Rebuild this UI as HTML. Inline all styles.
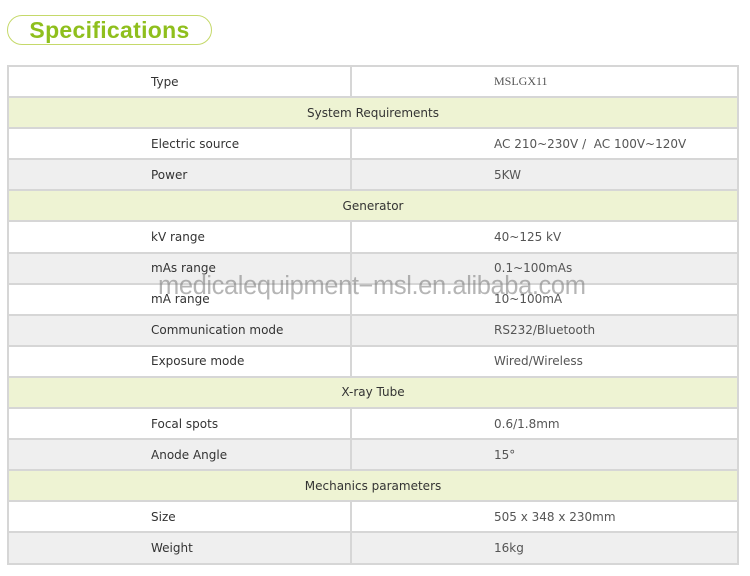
<!DOCTYPE html>
<html><head><meta charset="utf-8"><style>
body{margin:0;width:750px;height:576px;background:#fff;font-family:"DejaVu Sans","Liberation Sans",sans-serif;position:relative;overflow:hidden}
.pill{position:absolute;left:7px;top:15px;width:203px;height:28px;border:1.5px solid #c5d96a;border-radius:15px;color:#8fbf1d;font:bold 23px "Liberation Sans",sans-serif;text-align:center;line-height:28px;letter-spacing:0.3px}
table{position:absolute;left:7px;top:65px;width:732px;border-collapse:collapse;font-size:12px;color:#3a3a3a}
td{border:2px solid #d6d6d6;height:29.1px;padding:0}
td.l{width:343px;padding-left:142px;box-sizing:border-box;font-weight:500;color:#333}
td.r{padding-left:142px;color:#555}
tr.g td{background:#efefef}
tr.s td{background:#eef3d3;text-align:center;color:#333}
.wm{position:absolute;left:158px;top:272px;font:25.5px "Liberation Sans",sans-serif;color:rgba(120,120,120,0.55);letter-spacing:-0.4px}
</style></head><body>
<div class="pill">Specifications</div>
<table>
<tr><td class="l">Type</td><td class="r" style="font-family:'Liberation Serif',serif">MSLGX11</td></tr>
<tr class="s"><td colspan="2">System Requirements</td></tr>
<tr><td class="l">Electric source</td><td class="r">AC 210~230V /&nbsp; AC 100V~120V</td></tr>
<tr class="g"><td class="l">Power</td><td class="r">5KW</td></tr>
<tr class="s"><td colspan="2">Generator</td></tr>
<tr><td class="l">kV range</td><td class="r">40~125 kV</td></tr>
<tr class="g"><td class="l">mAs range</td><td class="r">0.1~100mAs</td></tr>
<tr><td class="l">mA range</td><td class="r">10~100mA</td></tr>
<tr class="g"><td class="l">Communication mode</td><td class="r">RS232/Bluetooth</td></tr>
<tr><td class="l">Exposure mode</td><td class="r">Wired/Wireless</td></tr>
<tr class="s"><td colspan="2">X-ray Tube</td></tr>
<tr><td class="l">Focal spots</td><td class="r">0.6/1.8mm</td></tr>
<tr class="g"><td class="l">Anode Angle</td><td class="r">15°</td></tr>
<tr class="s"><td colspan="2">Mechanics parameters</td></tr>
<tr><td class="l">Size</td><td class="r">505 x 348 x 230mm</td></tr>
<tr class="g"><td class="l">Weight</td><td class="r">16kg</td></tr>
</table>
<div class="wm">medicalequipment−msl.en.alibaba.com</div>
</body></html>
